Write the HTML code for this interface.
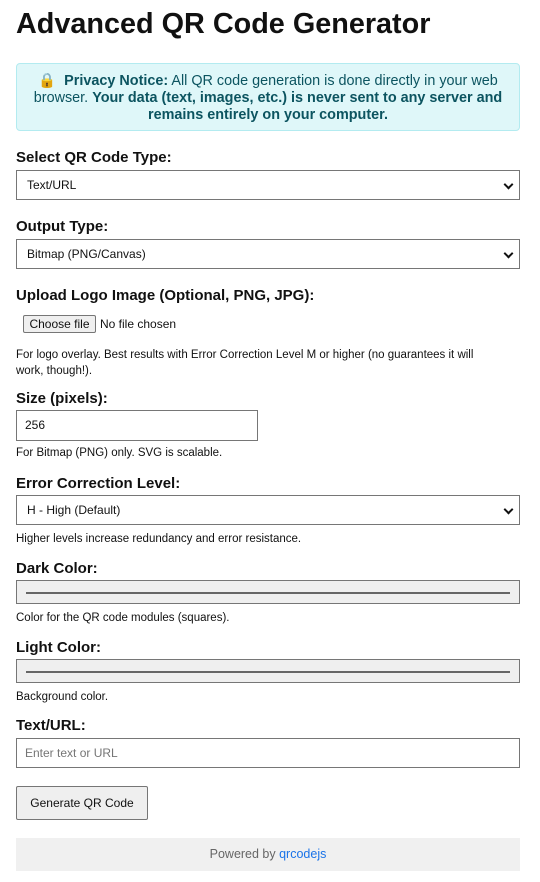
<!DOCTYPE html>
<html><head><meta charset="utf-8"><style>
body{margin:0;width:540px;height:882px;background:#fff;font-family:"Liberation Sans",sans-serif;color:#111;position:relative;overflow:hidden}
.a{position:absolute;white-space:nowrap}
h1{position:absolute;left:16px;top:8px;margin:0;font-size:28.8px;font-weight:bold;color:#111}
.lbl{font-size:15px;font-weight:bold;color:#111}
.box{position:absolute;left:16px;width:504px;border:1px solid #767676;background:#fff;box-sizing:border-box;font-size:12px}
.sel{height:30px;line-height:28px;padding-left:10px}
.sel:after{content:"";position:absolute;right:7px;top:10px;width:5px;height:5px;border-right:2px solid #111;border-bottom:2px solid #111;transform:rotate(45deg)}
.help{font-size:11.5px;color:#111}
.col{height:24px;background:#efefef}
.col:after{content:"";position:absolute;left:9px;right:9px;top:11px;height:2px;background:#666}
</style></head><body>
<h1>Advanced QR Code Generator</h1>
<div class="a" style="left:16px;top:63px;width:504px;height:68px;background:#dff7f9;border:1px solid #b3ebf0;border-radius:4px;box-sizing:border-box;color:#0c5460;font-size:14.4px;text-align:center;line-height:17px;padding:9px 6px 0;white-space:normal">🔒&nbsp; <b>Privacy Notice:</b> All QR code generation is done directly in your web browser. <b>Your data (text, images, etc.) is never sent to any server and remains entirely on your computer.</b></div>
<div class="a lbl" style="left:16px;top:149px">Select QR Code Type:</div>
<div class="box sel" style="top:170px">Text/URL</div>
<div class="a lbl" style="left:16px;top:218px">Output Type:</div>
<div class="box sel" style="top:239px">Bitmap (PNG/Canvas)</div>
<div class="a lbl" style="left:16px;top:287px">Upload Logo Image (Optional, PNG, JPG):</div>
<div class="a" style="left:23px;top:315px;width:73px;height:18px;box-sizing:border-box;border:1px solid #767676;background:#efefef;font-size:12px;line-height:16px;text-align:center;border-radius:2px">Choose file</div>
<div class="a" style="left:100px;top:317px;font-size:12px">No file chosen</div>
<div class="a help" style="left:16px;top:347px;line-height:16px;white-space:normal;width:482px">For logo overlay. Best results with Error Correction Level M or higher (no guarantees it will work, though!).</div>
<div class="a lbl" style="left:16px;top:390px">Size (pixels):</div>
<div class="box" style="top:410px;width:242px;height:31px;line-height:29px;padding-left:8px">256</div>
<div class="a help" style="left:16px;top:447px">For Bitmap (PNG) only. SVG is scalable.</div>
<div class="a lbl" style="left:16px;top:475px">Error Correction Level:</div>
<div class="box sel" style="top:495px">H - High (Default)</div>
<div class="a help" style="left:16px;top:533px">Higher levels increase redundancy and error resistance.</div>
<div class="a lbl" style="left:16px;top:560px">Dark Color:</div>
<div class="box col" style="top:580px"></div>
<div class="a help" style="left:16px;top:612px">Color for the QR code modules (squares).</div>
<div class="a lbl" style="left:16px;top:639px">Light Color:</div>
<div class="box col" style="top:659px"></div>
<div class="a help" style="left:16px;top:691px">Background color.</div>
<div class="a lbl" style="left:16px;top:717px">Text/URL:</div>
<div class="box" style="top:738px;height:30px;line-height:28px;padding-left:8px;color:#757575">Enter text or URL</div>
<div class="a" style="left:16px;top:786px;width:132px;height:34px;box-sizing:border-box;border:1px solid #767676;background:#efefef;font-size:12px;line-height:32px;text-align:center;border-radius:2px">Generate QR Code</div>
<div class="a" style="left:16px;top:838px;width:504px;height:33px;background:#f0f0f0;font-size:12.5px;line-height:33px;text-align:center;color:#666">Powered by <span style="color:#1a73e8">qrcodejs</span></div>
</body></html>
